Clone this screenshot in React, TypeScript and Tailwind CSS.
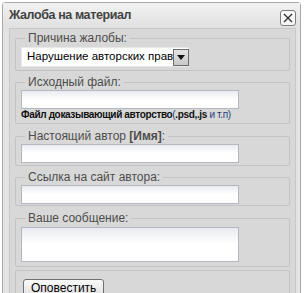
import React from 'react';

const boxCls = 'w-[275px] border border-[#c3c3c3] rounded-[2px] px-[5px]';
const legendCls = 'w-fit -mt-[7px] ml-[4px] px-[3px] bg-[#d8d8d8] text-[12px] leading-[12px] text-[#4d4d4d] whitespace-nowrap';
const inputCls =
	'h-[19px] w-[218px] border border-[#b4b6c2] bg-gradient-to-b from-[#e9ebef] via-white to-white mt-[2px]';

const App = () => {
	return (
		<div className="w-[304px] h-[293px] overflow-hidden bg-white pt-[2px] pl-[2px] font-['Liberation_Sans',Arial,sans-serif]">
			<div className="w-[299px] h-[300px] border border-[#a9a9a9] rounded-t-[3px] bg-[#e3e3e3]">
				<div className="h-[25px] flex items-center justify-between pl-[6px] pr-[4px] bg-gradient-to-b from-[#f2f2f2] to-[#e0e0e0]">
					<span className="text-[12.5px] font-bold text-[#434343] tracking-[-0.4px]">Жалоба на материал</span>
					<button className="w-[16px] h-[16px] mt-[5px] flex items-center justify-center border border-[#7d7d7d] rounded-[3px] bg-[#f7f7f7]">
						<svg width="10" height="10" viewBox="0 0 10 10">
							<path d="M1 1 L9 9 M9 1 L1 9" stroke="#333" strokeWidth="1.4" />
						</svg>
					</button>
				</div>
				<div className="ml-[6px] w-[287px] h-[280px] border border-[#c8c8c8] bg-[#d8d8d8] pl-[5px] pt-[9px] flex flex-col">
					<div className={`${boxCls} pb-[3px]`}>
						<div className={legendCls}>Причина жалобы:</div>
						<div className="mt-[3px] w-[168px] h-[20px] flex items-center justify-between bg-white border border-[#e8e8e8] pl-[5px] pr-[1px]">
							<span className="text-[11.5px] text-black whitespace-nowrap">Нарушение авторских прав</span>
							<span className="shrink-0 w-[16px] h-[17px] flex items-center justify-center border border-[#6c6c6c] bg-gradient-to-b from-[#e4e4e4] to-[#c8c8c8]">
								<svg width="8" height="5" viewBox="0 0 8 5">
									<path d="M0 0 L8 0 L4 5 Z" fill="#111" />
								</svg>
							</span>
						</div>
					</div>
					<div className={`${boxCls} mt-[11px] pb-[2px]`}>
						<div className={legendCls}>Исходный файл:</div>
						<div className={inputCls} />
						<div className="h-[12px] text-[10px] leading-[12px] text-[#111] whitespace-nowrap tracking-[-0.35px]">
							<span className="font-bold">Файл доказывающий авторство</span>
							<span className="text-[#1f3d7a]">(</span>
							<span className="font-bold">.psd,.js</span>
							<span className="text-[#1f3d7a]"> и т.п)</span>
						</div>
					</div>
					<div className={`${boxCls} mt-[12px] pb-[2px]`}>
						<div className={legendCls}>
							Настоящий автор <span className="font-bold">[Имя]</span>:
						</div>
						<div className={inputCls} />
					</div>
					<div className={`${boxCls} mt-[11px] pb-[1px]`}>
						<div className={legendCls}>Ссылка на сайт автора:</div>
						<div className={inputCls} />
					</div>
					<div className={`${boxCls} mt-[12px] pb-[4px]`}>
						<div className={legendCls}>Ваше сообщение:</div>
						<div className="h-[35px] w-[218px] border border-[#b4b6c2] bg-gradient-to-b from-[#e9ebef] via-white to-white mt-[3px]" />
					</div>
					<div className={`${boxCls} mt-[3px] pt-[4px] pl-[7px] h-[40px]`}>
						<button className="h-[20px] px-[7px] border border-[#6f6f6f] rounded-[3px] bg-gradient-to-b from-[#fafafa] to-[#dedede] text-[12px] leading-[15px] text-black">
							Оповестить
						</button>
					</div>
				</div>
			</div>
		</div>
	);
};

export default App;
